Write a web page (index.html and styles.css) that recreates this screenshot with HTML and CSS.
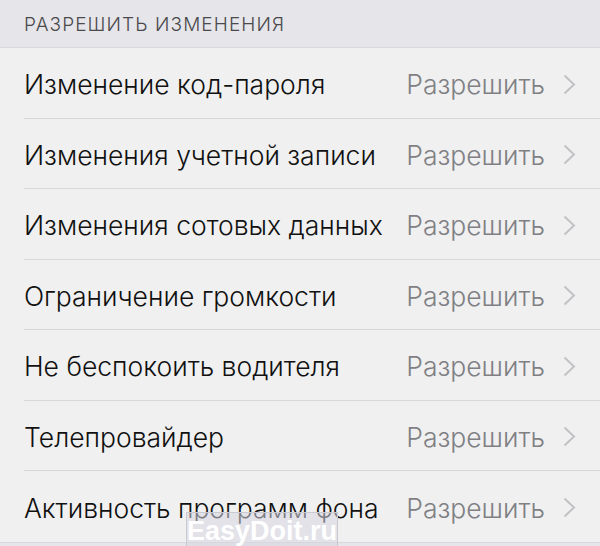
FILE: index.html
```html
<!DOCTYPE html>
<html lang="ru">
<head>
  <meta charset="UTF-8">
  <title>Разрешить изменения</title>
  <link rel="stylesheet" href="styles.css">
</head>
<body>

  <div class="section-header">РАЗРЕШИТЬ ИЗМЕНЕНИЯ</div>

  <ul class="list">
    <li class="row"><span class="label">Изменение код-пароля</span><span class="value">Разрешить</span><svg class="chevron" viewBox="0 0 13 21"><polyline points="1.5,1.5 11,10.5 1.5,19.5"/></svg></li>
    <li class="row"><span class="label">Изменения учетной записи</span><span class="value">Разрешить</span><svg class="chevron" viewBox="0 0 13 21"><polyline points="1.5,1.5 11,10.5 1.5,19.5"/></svg></li>
    <li class="row"><span class="label">Изменения сотовых данных</span><span class="value">Разрешить</span><svg class="chevron" viewBox="0 0 13 21"><polyline points="1.5,1.5 11,10.5 1.5,19.5"/></svg></li>
    <li class="row"><span class="label">Ограничение громкости</span><span class="value">Разрешить</span><svg class="chevron" viewBox="0 0 13 21"><polyline points="1.5,1.5 11,10.5 1.5,19.5"/></svg></li>
    <li class="row"><span class="label">Не беспокоить водителя</span><span class="value">Разрешить</span><svg class="chevron" viewBox="0 0 13 21"><polyline points="1.5,1.5 11,10.5 1.5,19.5"/></svg></li>
    <li class="row"><span class="label">Телепровайдер</span><span class="value">Разрешить</span><svg class="chevron" viewBox="0 0 13 21"><polyline points="1.5,1.5 11,10.5 1.5,19.5"/></svg></li>
    <li class="row"><span class="label">Активность программ фона</span><span class="value">Разрешить</span><svg class="chevron" viewBox="0 0 13 21"><polyline points="1.5,1.5 11,10.5 1.5,19.5"/></svg></li>
  </ul>

  <div class="footer"></div>

  <div class="watermark">EasyDoit.ru</div>

</body>
</html>
```

FILE: styles.css
```css
body {
  margin: 0;
  padding: 0;
  background-color: #efeff0;
  font-family: Inter, "Noto Sans", sans-serif;
  overflow: hidden;
  height: 546px;
  position: relative;
}
.section-header {
  height: 48px;
  box-sizing: border-box;
  padding: 13px 24px 0;
  background-color: #e6e5ea;
  color: #4a4a4c;
  font-size: 19px;
  font-weight: 300;
  letter-spacing: 1.1px;
  border-bottom: 1px solid #d9d9dc;
}
.list {
  list-style: none;
  margin: 0;
  padding: 0 0 0 24px;
  background-color: #f0f0f0;
}
.row {
  display: flex;
  align-items: center;
  height: 70.5px;
  padding-top: 3px;
  box-sizing: border-box;
  padding-right: 24px;
  border-bottom: 1px solid #d8d8da;
}
.row:last-child {
  border-bottom: none;
}
.label {
  flex: 1;
  font-size: 26.5px;
  font-weight: 300;
  color: #111;
  white-space: nowrap;
}
.value {
  font-size: 26.5px;
  font-weight: 300;
  color: #7f7f84;
  margin-right: 18px;
}
.chevron {
  width: 13px;
  height: 21px;
  fill: none;
  stroke: #c2c2c6;
  stroke-width: 2;
}
.footer {
  height: 10px;
  background-color: #e6e5ea;
  border-top: 1px solid #d8d8da;
}
.watermark {
  position: absolute;
  left: 186px;
  top: 512px;
  width: 152px;
  height: 40px;
  box-sizing: border-box;
  border: 1px solid #c9c9d2;
  background-color: rgba(215, 215, 225, 0.55);
  color: #fff;
  font-family: "Liberation Sans", Arial, sans-serif;
  font-weight: bold;
  font-size: 27px;
  text-align: center;
  line-height: 36px;
}
```
